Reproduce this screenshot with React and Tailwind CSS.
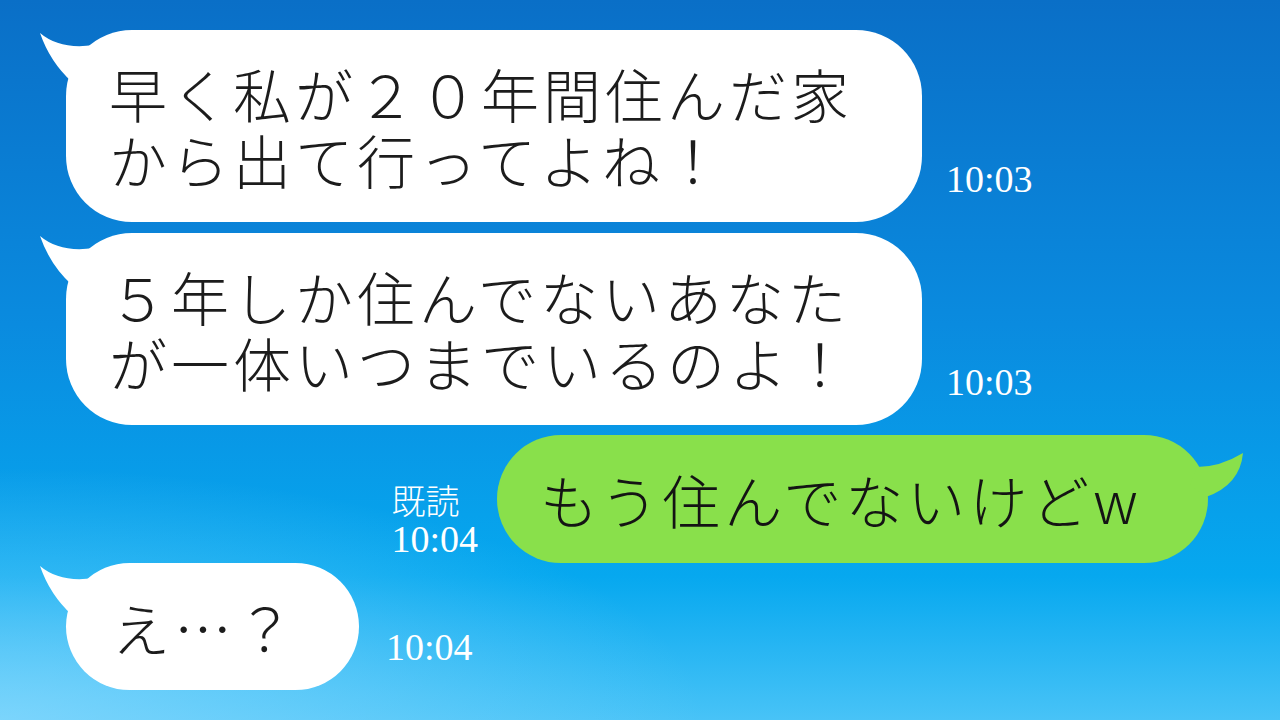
import React from "react";

const jp = { fontFamily: '"Noto Sans CJK JP", "Noto Sans", sans-serif' };
const serif = { fontFamily: '"Liberation Serif", "Noto Sans CJK JP", serif' };

const LeftTail = () => (
  <svg
    className="absolute left-[-30px] top-0 w-[70px] h-[70px]"
    viewBox="0 0 70 70"
  >
    <path d="M4,3 Q24,20 58,15 L70,40 L36,52 Q14,32 4,3 Z" fill="#ffffff" />
  </svg>
);

const RightTail = () => (
  <svg
    className="absolute right-[-42px] top-0 w-[90px] h-[70px]"
    viewBox="0 0 90 70"
  >
    <path d="M83,18 Q60,32 37,32 L30,50 L46,62 Q80,50 83,18 Z" fill="#89e04b" />
  </svg>
);

const Time = ({ children, className = "" }) => (
  <div
    className={"text-[38px] leading-none text-white font-light " + className}
    style={serif}
  >
    {children}
  </div>
);

const Incoming = ({ lines, width, height, time, className = "" }) => (
  <div className={"flex items-end pl-[66px] " + className}>
    <div
      className="relative flex flex-col justify-center bg-white rounded-[66px] pl-[43px]"
      style={{ width, height }}
    >
      <LeftTail />
      {lines.map((l) => (
        <div
          key={l}
          className="relative text-[58px] leading-[66px] tracking-[4px] text-[#1c1c1c] font-light whitespace-nowrap"
          style={jp}
        >
          {l}
        </div>
      ))}
    </div>
    <Time className="ml-[24px] mb-[24px]">{time}</Time>
  </div>
);

export default function App() {
  return (
    <div className="w-[1280px] h-[720px] overflow-hidden flex flex-col pt-[30px] bg-[radial-gradient(ellipse_55%_35%_at_0%_100%,rgba(150,222,255,0.65),transparent),linear-gradient(180deg,#0a6fc7_0%,#0a8bdf_45%,#06a8ef_80%,#48c3f7_100%)]">
      <Incoming
        lines={["早く私が２０年間住んだ家", "から出て行ってよね！"]}
        width={856}
        height={192}
        time="10:03"
      />
      <Incoming
        className="mt-[11px]"
        lines={["５年しか住んでないあなた", "が一体いつまでいるのよ！"]}
        width={856}
        height={192}
        time="10:03"
      />

      {/* sent */}
      <div className="mt-[10px] flex items-end justify-end pr-[72px]">
        <div className="flex flex-col mr-[19px] mb-[5px] text-white">
          <div className="text-[34px] leading-[40px] font-light" style={jp}>
            既読
          </div>
          <Time>10:04</Time>
        </div>
        <div className="relative flex items-center w-[711px] h-[128px] rounded-[64px] bg-[#89e04b] pl-[43px]">
          <RightTail />
          <div
            className="relative text-[58px] leading-[66px] tracking-[4px] text-[#141414] font-light whitespace-nowrap"
            style={jp}
          >
            もう住んでないけどw
          </div>
        </div>
      </div>

      <div className="flex items-end pl-[66px]">
        <div className="relative flex items-center w-[293px] h-[127px] rounded-[64px] bg-white pl-[46px]">
          <LeftTail />
          <div
            className="relative text-[58px] leading-[66px] tracking-[4px] text-[#1c1c1c] font-light whitespace-nowrap"
            style={jp}
          >
            え…？
          </div>
        </div>
        <Time className="ml-[27px] mb-[24px]">10:04</Time>
      </div>
    </div>
  );
}
